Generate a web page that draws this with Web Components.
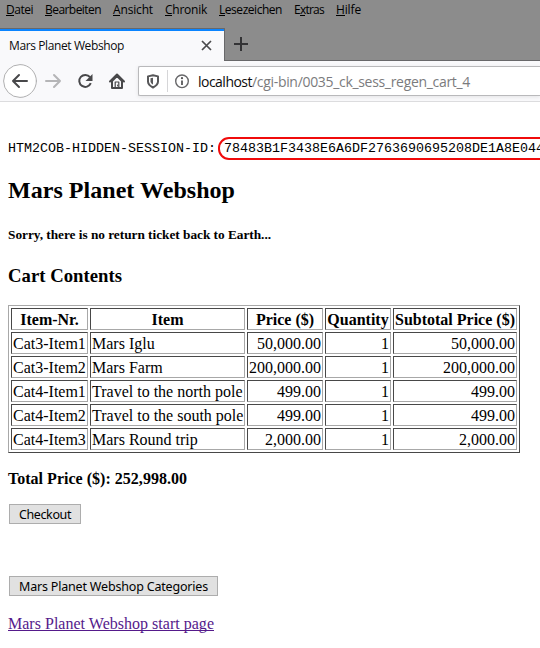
<!DOCTYPE html>
<html lang="de">
<head>
<meta charset="utf-8">
<title>Mars Planet Webshop</title>
<style>
html,body{margin:0;height:100%;overflow:hidden;background:#fff}
</style>
</head>
<body>
<browser-window>
  <menu-bar slot="chrome"></menu-bar>
  <tab-strip slot="chrome">Mars Planet Webshop</tab-strip>
  <nav-toolbar slot="chrome"></nav-toolbar>
  <shop-page></shop-page>
</browser-window>
<script>
const define = (name, html, setup) => {
  const tpl = document.createElement('template');
  tpl.innerHTML = html;
  customElements.define(name, class extends HTMLElement {
    connectedCallback() {
      if (this.shadowRoot) return;
      this.attachShadow({mode: 'open'}).append(tpl.content.cloneNode(true));
      if (setup) setup.call(this, this.shadowRoot);
    }
  });
};

// One line of text whose tracking is adjusted to fill the width in "w".
define('fit-text', `<style>
:host{display:inline-block;white-space:nowrap;flex:none}
span{display:inline-block;white-space:nowrap}
</style><span><slot></slot></span>`, function (root) {
  const w = Number(this.getAttribute('w'));
  if (!w) return;
  const span = root.querySelector('span');
  const n = this.textContent.length;
  span.style.letterSpacing = (w - span.getBoundingClientRect().width) / n + 'px';
  this.style.width = w + 'px';
});

define('browser-window', `<style>
:host{display:flex;flex-direction:column;width:540px;height:648px;overflow:hidden;background:#fff}
main{flex:1}
</style><slot name="chrome"></slot><main><slot></slot></main>`);

define('menu-bar', `<style>
:host{display:flex;gap:12px;height:28px;padding-left:6px;box-sizing:border-box;background:#8c8c8c;color:#000;font:12px/20px "Open Sans","Noto Sans",sans-serif}
u{text-decoration:none;box-shadow:0 1px 0 #000;display:inline-block;height:15px;line-height:20px;vertical-align:top}
</style>
<fit-text w="27"><u>D</u>atei</fit-text><fit-text w="56"><u>B</u>earbeiten</fit-text><fit-text w="40"><u>A</u>nsicht</fit-text><fit-text w="42"><u>C</u>hronik</fit-text><fit-text w="63"><u>L</u>esezeichen</fit-text><fit-text w="30">E<u>x</u>tras</fit-text><fit-text w="25"><u>H</u>ilfe</fit-text>`);

define('tab-strip', `<style>
:host{display:flex;height:33px;background:#8c8c8c;font:12px/16px "Open Sans","Noto Sans",sans-serif;color:#0c0c0d}
.tab{width:225px;box-sizing:border-box;display:flex;justify-content:space-between;align-items:flex-start;border-top:1px solid #68686a;border-right:1px solid #68686a;background:#f9f9fb;padding:9px 12px 0 9px;box-shadow:inset 0 2px #0a84ff}
.tab svg{margin-top:2px}
.rest{flex:1;border-bottom:1px solid #68686a;padding:9px 0 0 8px}
svg{display:block}
</style>
<div class="tab"><fit-text w="115"><slot></slot></fit-text>
<svg width="11" height="11" viewBox="0 0 11 11"><path d="M1 1l9 9M10 1l-9 9" stroke="#4a4a4c" stroke-width="1.7"/></svg></div>
<div class="rest"><svg width="16" height="14" viewBox="0 0 16 14"><path d="M1 7h14M8 0v14" stroke="#333335" stroke-width="2"/></svg></div>`, function (root) {
  const t = root.querySelector('fit-text');
  t.textContent = this.textContent;
  t.replaceWith(t.cloneNode(true));
});

define('nav-toolbar', `<style>
:host{display:flex;height:41px;box-sizing:border-box;border-bottom:1px solid #dcdcde;background:#f9f9fb;font:14px/20px "Open Sans","Noto Sans",sans-serif}
svg{display:block;flex:none}
.url{flex:1;display:flex;height:30px;box-sizing:border-box;margin-top:5px;border:1px solid #b9b9bb;border-right:0;border-radius:2px 0 0 2px;background:#fff;box-shadow:0 1px 4px rgba(0,0,0,.09);line-height:30px;color:#7b7b7d;overflow:hidden}
b{font-weight:400;color:#0c0c0d}
</style>
<svg width="138" height="40" viewBox="0 61 138 40" fill="none" stroke="#48484a" stroke-width="2" stroke-linecap="round" stroke-linejoin="round">
<circle cx="20" cy="81" r="16.4" fill="#fff" stroke="#b0b0b1" stroke-width="1"/>
<path d="M27 81H13M19 75l-6 6 6 6"/>
<path d="M46 81h14M54 75l6 6-6 6" stroke="#b5b5b7"/>
<path d="M90 77.2a6 6 0 1 0 .8 6" stroke-linecap="butt"/>
<path d="M92.5 74v7h-7z" fill="#48484a" stroke="none"/>
<path d="M110 81.5l7-7 7 7M112 81v7h10v-7M112 81l5-5 5 5"/>
<path d="M115.2 88v-6h3.6v6" stroke-width="1.2" stroke-linecap="butt"/><path d="M117.6 85v1" stroke-width="1"/>
</svg>
<div class="url">
<svg width="59" height="28" viewBox="139 67 59 28" fill="none">
<path d="M153 75.2l5 1.2v5.1c0 2.5-2 4.4-5 6-3-1.6-5-3.5-5-6v-5.1z" stroke="#58585a" stroke-width="2" stroke-linejoin="round"/>
<path d="M153 77.8v6.8c-1.6-1-2.5-2-2.5-3.4v-2.9z" fill="#58585a"/>
<path d="M167.5 70v22" stroke="#d6d6d8"/>
<circle cx="182" cy="81.3" r="6.3" stroke="#68686a" stroke-width="1.4"/>
<circle cx="182" cy="78.2" r="1.15" fill="#58585a"/><path d="M182 80.5v4.5" stroke="#58585a" stroke-width="1.8"/>
</svg><fit-text w="54"><b>localhost</b></fit-text><fit-text w="218">/cgi-bin/0035_ck_sess_regen_cart_4</fit-text></div>`);

define('session-id', `<style>
:host{display:flex;align-items:center;height:23px;font:13.333px/23px "Liberation Mono",monospace;white-space:pre}
span{flex:none;width:340px;height:23px;line-height:19px;box-sizing:border-box;border:2px solid #f00b0b;border-radius:11px;margin-left:2px;padding-left:4px}
</style><fit-text w="208">HTM2COB-HIDDEN-SESSION-ID:</fit-text><span><slot></slot></span>`);

define('shop-button', `<style>
:host{display:block;margin-left:1px}
button{display:block;height:20px;box-sizing:border-box;border:1px solid #adadad;background:#e1e1e1;color:#000;padding:0 9px;font:12.5px/19px "Noto Sans","DejaVu Sans",sans-serif}
</style><button><slot></slot></button>`);

define('cart-table', `<style>
:host{display:block;width:512px}
table{width:512px;table-layout:fixed;border-collapse:separate;border-spacing:2px;border:1px solid;border-color:#a8a8a8 #484848 #484848 #a8a8a8;box-sizing:border-box;font:16px/18px "Liberation Serif",serif}
td,th{box-sizing:border-box;height:22px;padding:2px 1px 0;border:1px solid;border-color:#484848 #a8a8a8 #a8a8a8 #484848;overflow:hidden;white-space:nowrap;text-align:left}
th{text-align:center}
td:nth-child(n+3){text-align:right}
</style>
<table><colgroup><col style="width:77px"><col style="width:155px"><col style="width:76px"><col style="width:66px"><col style="width:124px"></colgroup>
<thead><tr><th>Item-Nr.</th><th>Item</th><th>Price ($)</th><th>Quantity</th><th>Subtotal Price ($)</th></tr></thead><tbody></tbody></table>`, function (root) {
  const rows = [
    ['Cat3-Item1', 'Mars Iglu', '50,000.00', '1', '50,000.00'],
    ['Cat3-Item2', 'Mars Farm', '200,000.00', '1', '200,000.00'],
    ['Cat4-Item1', 'Travel to the north pole', '499.00', '1', '499.00'],
    ['Cat4-Item2', 'Travel to the south pole', '499.00', '1', '499.00'],
    ['Cat4-Item3', 'Mars Round trip', '2,000.00', '1', '2,000.00']
  ];
  const body = root.querySelector('tbody');
  for (const r of rows) {
    const tr = body.insertRow();
    for (const c of r) tr.insertCell().textContent = c;
  }
});

define('shop-page', `<style>
:host{display:block;padding:35px 0 0 8px;font:16px/18px "Liberation Serif",serif;color:#000}
h1,h2,h3,p{margin:0}
h1{font-size:24px;line-height:28px;margin-top:16px}
h3{font-size:13.333px;line-height:16px;margin-top:23px}
h2{font-size:18.72px;line-height:22px;margin-top:22px}
cart-table{margin-top:18px}
.total{font-weight:700;margin-top:17px}
.b1{margin-top:16px}
.b2{margin-top:52px}
a{display:inline-block;color:#551a8b;text-decoration:none}
.l{margin-top:19px}
</style>
<session-id>78483B1F3438E6A6DF2763690695208DE1A8E044</session-id>
<h1><fit-text w="227">Mars Planet Webshop</fit-text></h1>
<h3><fit-text w="263">Sorry, there is no return ticket back to Earth...</fit-text></h3>
<h2><fit-text w="114">Cart Contents</fit-text></h2>
<cart-table></cart-table>
<p class="total"><fit-text w="179">Total Price ($): 252,998.00</fit-text></p>
<shop-button class="b1"><fit-text w="52">Checkout</fit-text></shop-button>
<shop-button class="b2"><fit-text w="189">Mars Planet Webshop Categories</fit-text></shop-button>
<p class="l"><a href="#"><fit-text w="206" style="border-bottom:1px solid;height:15px">Mars Planet Webshop start page</fit-text></a></p>`);
</script>
</body>
</html>
